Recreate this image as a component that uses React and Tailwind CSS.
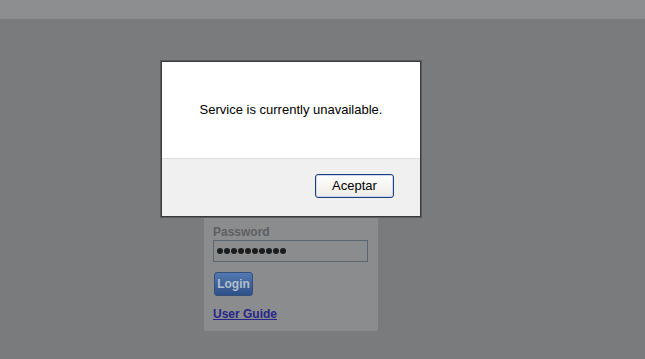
import React from "react";

const font = { fontFamily: '"Liberation Sans", Arial, sans-serif' };

const LoginPanel = () => {
  const dots = Array.from({ length: 10 });
  return (
    <div className="ml-[204px] mt-[41px] w-[174px] h-[271px] bg-[#8b8c8d] rounded-b-[2px] flex flex-col justify-end px-[9px] pb-[10px]">
      <label className="text-[12px] font-bold text-[#5e5f61] leading-[14px]">Password</label>
      <div className="mt-[1px] w-[155px] h-[22px] border border-[#5a6672] flex items-center gap-[1px] pl-[3px]">
        {dots.map((_, i) => (
          <span key={i} className="w-[6px] h-[6px] rounded-full bg-[#1c1c1c]" />
        ))}
      </div>
      <button className="mt-[10px] ml-[1px] w-[39px] h-[24px] rounded-[3px] border border-[#34507a] bg-gradient-to-b from-[#5279b0] to-[#2e5088] text-[12px] font-bold text-[#b4bfcd] leading-none">
        Login
      </button>
      <a href="#" className="mt-[11px] text-[12px] font-bold text-[#27278a] underline leading-[14px] self-start">
        User Guide
      </a>
    </div>
  );
};

const Dialog = () => (
  <div className="absolute left-[161px] top-[61px] w-[260px] h-[156px] border border-[#3a3a3a] shadow-[0_0_0_1px_#5c5c5c] bg-white flex flex-col">
    <div className="h-[96px] flex items-center justify-center text-[13px] text-black">
      Service is currently unavailable.
    </div>
    <div className="flex-1 bg-[#f0f0f0] border-t border-[#dedede] flex items-center justify-end pr-[26px] pb-[3px]">
      <button className="w-[79px] h-[24px] rounded-[3px] border border-[#1f3f78] bg-gradient-to-b from-white to-[#ecebe6] shadow-[inset_0_0_0_1px_#c8d8f0] text-[13px] text-black">
        Aceptar
      </button>
    </div>
  </div>
);

export default function App() {
  return (
    <div className="relative w-[645px] h-[359px] overflow-hidden bg-[#7a7b7c]" style={font}>
      <div className="h-[19px] bg-[#8d8e8f]" />
      <LoginPanel />
      <Dialog />
    </div>
  );
}
